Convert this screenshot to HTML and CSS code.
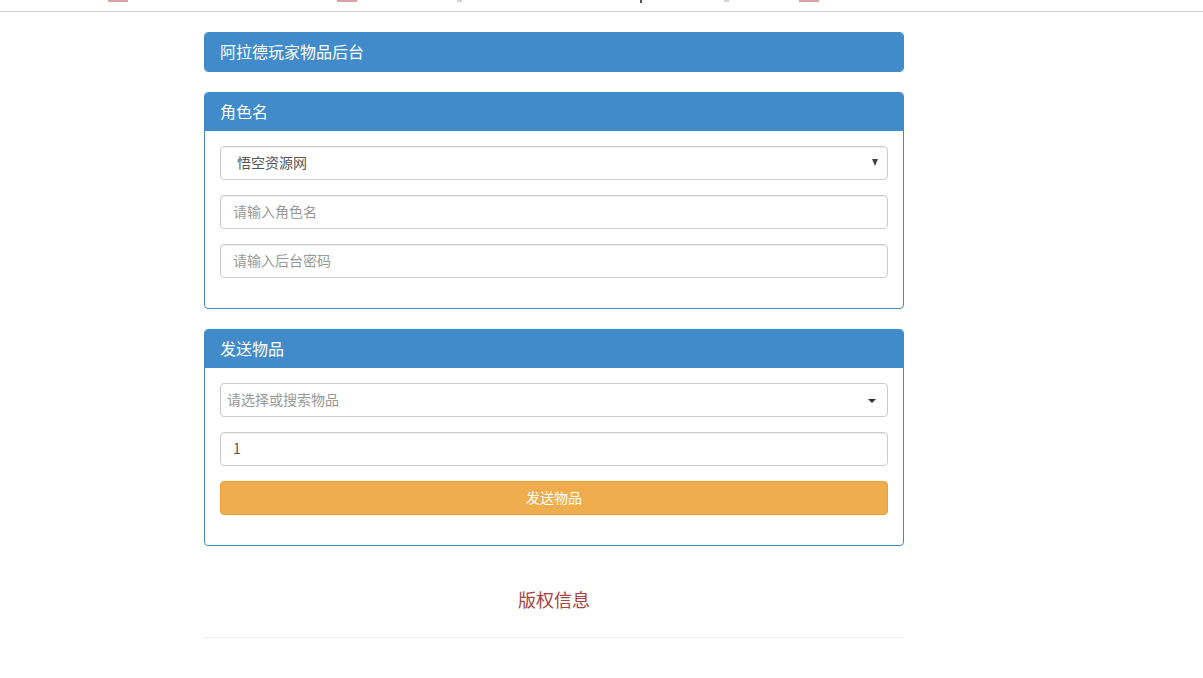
FILE: index.html
```html
<!DOCTYPE html>
<html lang="zh-CN">

<head>
  <meta charset="UTF-8">
  <meta name="viewport" content="width=device-width, initial-scale=1.0">
  <title>阿拉德玩家物品后台</title>
  <link rel="stylesheet" href="styles.css">
</head>

<body>
  <div class="topbar">
    <span class="mark red m1"></span>
    <span class="mark red m2"></span>
    <span class="mark grey m3"></span>
    <span class="mark dark m4"></span>
    <span class="mark grey m5"></span>
    <span class="mark red m6"></span>
  </div>

  <div class="container">
    <div class="panel">
      <div class="panel-heading">阿拉德玩家物品后台</div>
    </div>

    <div class="panel">
      <div class="panel-heading">角色名</div>
      <div class="panel-body">
        <div class="form-group select-wrap">
          <select class="form-control server-select">
            <option>悟空资源网</option>
          </select>
          <span class="select-arrow"></span>
        </div>
        <div class="form-group">
          <input type="text" class="form-control" placeholder="请输入角色名" />
        </div>
        <div class="form-group">
          <input type="password" class="form-control" placeholder="请输入后台密码" />
        </div>
      </div>
    </div>

    <div class="panel">
      <div class="panel-heading">发送物品</div>
      <div class="panel-body">
        <div class="form-group">
          <div class="select2">
            <span class="select2-placeholder">请选择或搜索物品</span>
            <span class="select2-caret"></span>
          </div>
        </div>
        <div class="form-group">
          <input type="text" class="form-control" value="1" />
        </div>
        <div class="form-group">
          <button class="btn-warning">发送物品</button>
        </div>
      </div>
    </div>

    <div class="footer">
      <h4>版权信息</h4>
    </div>
  </div>
</body>

</html>
```

FILE: styles.css
```css
body {
  margin: 0;
  font-family: "Liberation Sans", "Noto Sans CJK SC", sans-serif;
  font-size: 14px;
  color: #333;
  background: #fff;
}

.topbar {
  height: 11px;
  border-bottom: 1px solid #cfcfcf;
  display: flex;
  align-items: flex-start;
}

.mark {
  display: block;
  height: 2px;
}

.mark.red {
  width: 20px;
  background: #d9a3a6;
}

.mark.grey {
  width: 5px;
  background: #d4d4d4;
}

.mark.dark {
  width: 2px;
  height: 3px;
  background: #555;
}

.m1 { margin-left: 108px; }
.m2 { margin-left: 209px; }
.m3 { margin-left: 100px; }
.m4 { margin-left: 178px; }
.m5 { margin-left: 82px; }
.m6 { margin-left: 70px; }

.container {
  width: 700px;
  margin: 20px 0 0 204px;
}

.panel {
  margin-bottom: 20px;
  background: #fff;
  border: 1px solid #428bca;
  border-radius: 4px;
  overflow: hidden;
}

.panel-heading {
  background: #428bca;
  color: #fff;
  font-size: 16px;
  line-height: 18px;
  padding: 9px 15px 11px;
  font-family: "Noto Sans CJK SC", sans-serif;
}

.panel-body {
  padding: 15px;
}

.form-group {
  margin-bottom: 15px;
}

.form-control {
  display: block;
  box-sizing: border-box;
  width: 100%;
  height: 34px;
  padding: 5px 12px 7px;
  font-size: 14px;
  font-family: "Noto Sans CJK SC", sans-serif;
  color: #555;
  background: #fff;
  border: 1px solid #ccc;
  border-radius: 4px;
  box-shadow: inset 0 1px 1px rgba(0, 0, 0, 0.075);
  outline: none;
}

.form-control::placeholder {
  color: #999;
}

.select-wrap {
  position: relative;
}

.server-select {
  appearance: none;
  -webkit-appearance: none;
  padding-left: 16px;
}

.select-arrow {
  position: absolute;
  right: 10px;
  top: 13px;
  width: 0;
  height: 0;
  border-left: 3.5px solid transparent;
  border-right: 3.5px solid transparent;
  border-top: 7px solid #444;
}

.select2 {
  position: relative;
  box-sizing: border-box;
  height: 34px;
  padding: 0 6px 2px;
  border: 1px solid #ccc;
  border-radius: 4px;
  display: flex;
  align-items: center;
}

.select2-placeholder {
  color: #999;
  font-family: "Noto Sans CJK SC", sans-serif;
}

.select2-caret {
  position: absolute;
  right: 11px;
  top: 15px;
  width: 0;
  height: 0;
  border-left: 4px solid transparent;
  border-right: 4px solid transparent;
  border-top: 4px solid #333;
}

.btn-warning {
  display: block;
  width: 100%;
  height: 34px;
  padding: 5px 12px 7px;
  font-size: 14px;
  font-family: "Noto Sans CJK SC", sans-serif;
  color: #fff;
  background: #f0ad4e;
  border: 1px solid #eea236;
  border-radius: 4px;
  cursor: pointer;
}

.btn-warning:hover {
  background: #ec971f;
}

.footer {
  padding: 20px 0 25px;
  border-bottom: 1px solid #eee;
  text-align: center;
}

.footer h4 {
  margin: 0;
  font-size: 18px;
  line-height: 26px;
  font-weight: normal;
  color: #a94442;
  font-family: "Noto Sans CJK SC", sans-serif;
}
```
